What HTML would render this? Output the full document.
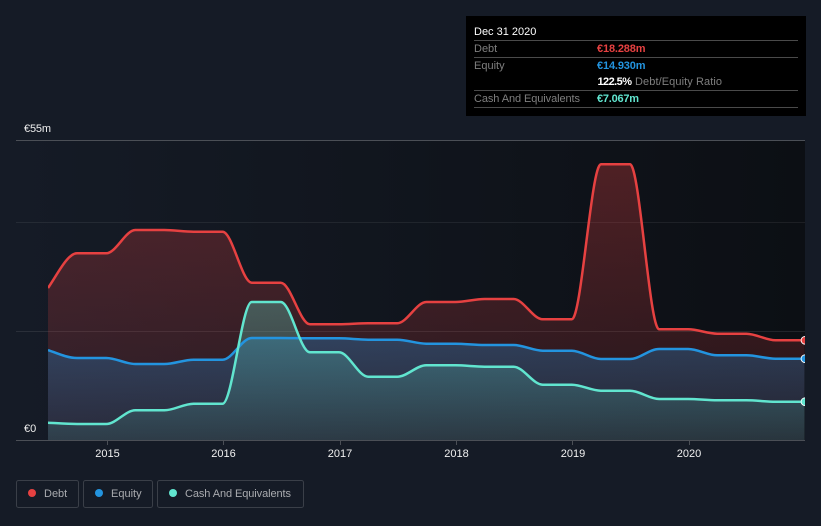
<!DOCTYPE html>
<html><head><meta charset="utf-8">
<style>
html,body{margin:0;padding:0;background:#151b26;}
body{width:821px;height:526px;overflow:hidden;position:relative;font-family:"Liberation Sans",sans-serif;}
svg{position:absolute;left:0;top:0;}
text{font-family:"Liberation Sans",sans-serif;font-size:11px;}
</style></head><body>
<svg width="821" height="526" viewBox="0 0 821 526" xmlns="http://www.w3.org/2000/svg">
<defs>
<linearGradient id="bg" x1="0" x2="1" y1="0" y2="0"><stop offset="0" stop-color="#151b26"/><stop offset="1" stop-color="#0c0f14"/></linearGradient>
<linearGradient id="fr" x1="0" x2="0" y1="0" y2="1"><stop offset="0" stop-color="#e64141" stop-opacity=".3"/><stop offset="1" stop-color="#e64141" stop-opacity=".1"/></linearGradient>
<linearGradient id="fb" x1="0" x2="0" y1="0" y2="1"><stop offset="0" stop-color="#2394df" stop-opacity=".3"/><stop offset="1" stop-color="#2394df" stop-opacity=".1"/></linearGradient>
<linearGradient id="fc" x1="0" x2="0" y1="0" y2="1"><stop offset="0" stop-color="#61e5cf" stop-opacity=".3"/><stop offset="1" stop-color="#61e5cf" stop-opacity=".1"/></linearGradient>
<clipPath id="plot"><rect x="48" y="140" width="757" height="300"/></clipPath>
</defs>
<rect width="821" height="526" fill="#151b26"/>
<rect x="16" y="140" width="789" height="300" fill="url(#bg)"/>
<rect x="16" y="222" width="789" height="1" fill="#fff" fill-opacity=".07"/>
<rect x="16" y="331" width="789" height="1" fill="#fff" fill-opacity=".09"/>
<rect x="16" y="140" width="789" height="1" fill="#4b4f56"/>
<g clip-path="url(#plot)">
<path fill="url(#fr)" d="M48 288c9.7 -14 19.4 -34.7 29.1 -34.7h29.1c9.7 0 19.4 -23.3 29.1 -23.3h29.1c9.7 0 19.4 1.7 29.1 1.7h29.1c9.7 0 19.4 51 29.1 51h29.1c9.7 0 19.4 41.6 29.1 41.6h29.1c9.7 0 19.4 -1 29.1 -1h29.1c9.7 0 19.4 -21.3 29.1 -21.3h29.1c9.7 0 19.4 -3 29.1 -3h29.1c9.7 0 19.4 20.3 29.1 20.3h29.1c9.7 0 19.4 -155 29.1 -155h29.1c9.7 0 19.4 165 29.1 165h29.1c9.7 0 19.4 4.4 29.1 4.4h29.1c9.7 0 19.4 6.6 29.1 6.6h29.1V440H48Z"/>
<path fill="url(#fb)" d="M48 350c9.7 3.5 19.4 8 29.1 8h29.1c9.7 0 19.4 6 29.1 6h29.1c9.7 0 19.4 -4.3 29.1 -4.3h29.1c9.7 0 19.4 -21.7 29.1 -21.7h29.1c9.7 0 19.4 .3 29.1 .3h29.1c9.7 0 19.4 1.4 29.1 1.4h29.1c9.7 0 19.4 4 29.1 4h29.1c9.7 0 19.4 1.3 29.1 1.3h29.1c9.7 0 19.4 5.7 29.1 5.7h29.1c9.7 0 19.4 8.3 29.1 8.3h29.1c9.7 0 19.4 -10 29.1 -10h29.1c9.7 0 19.4 6.3 29.1 6.3h29.1c9.7 0 19.4 3.4 29.1 3.4h29.1V440H48Z"/>
<path fill="url(#fc)" d="M48 422.7c9.7 .5 19.4 1.3 29.1 1.3h29.1c9.7 0 19.4 -13.7 29.1 -13.7h29.1c9.7 0 19.4 -6.6 29.1 -6.6h29.1c9.7 0 19.4 -101.7 29.1 -101.7h29.1c9.7 0 19.4 50.3 29.1 50.3h29.1c9.7 0 19.4 24.4 29.1 24.4h29.1c9.7 0 19.4 -11.4 29.1 -11.4h29.1c9.7 0 19.4 1.4 29.1 1.4h29.1c9.7 0 19.4 18 29.1 18h29.1c9.7 0 19.4 6 29.1 6h29.1c9.7 0 19.4 8.3 29.1 8.3h29.1c9.7 0 19.4 1.3 29.1 1.3h29.1c9.7 0 19.4 1.4 29.1 1.4h29.1V440H48Z"/>
<path fill="none" stroke="#e64141" stroke-width="2.5" d="M48 288c9.7 -14 19.4 -34.7 29.1 -34.7h29.1c9.7 0 19.4 -23.3 29.1 -23.3h29.1c9.7 0 19.4 1.7 29.1 1.7h29.1c9.7 0 19.4 51 29.1 51h29.1c9.7 0 19.4 41.6 29.1 41.6h29.1c9.7 0 19.4 -1 29.1 -1h29.1c9.7 0 19.4 -21.3 29.1 -21.3h29.1c9.7 0 19.4 -3 29.1 -3h29.1c9.7 0 19.4 20.3 29.1 20.3h29.1c9.7 0 19.4 -155 29.1 -155h29.1c9.7 0 19.4 165 29.1 165h29.1c9.7 0 19.4 4.4 29.1 4.4h29.1c9.7 0 19.4 6.6 29.1 6.6h29.1"/>
<path fill="none" stroke="#2394df" stroke-width="2.5" d="M48 350c9.7 3.5 19.4 8 29.1 8h29.1c9.7 0 19.4 6 29.1 6h29.1c9.7 0 19.4 -4.3 29.1 -4.3h29.1c9.7 0 19.4 -21.7 29.1 -21.7h29.1c9.7 0 19.4 .3 29.1 .3h29.1c9.7 0 19.4 1.4 29.1 1.4h29.1c9.7 0 19.4 4 29.1 4h29.1c9.7 0 19.4 1.3 29.1 1.3h29.1c9.7 0 19.4 5.7 29.1 5.7h29.1c9.7 0 19.4 8.3 29.1 8.3h29.1c9.7 0 19.4 -10 29.1 -10h29.1c9.7 0 19.4 6.3 29.1 6.3h29.1c9.7 0 19.4 3.4 29.1 3.4h29.1"/>
<path fill="none" stroke="#61e5cf" stroke-width="2.5" d="M48 422.7c9.7 .5 19.4 1.3 29.1 1.3h29.1c9.7 0 19.4 -13.7 29.1 -13.7h29.1c9.7 0 19.4 -6.6 29.1 -6.6h29.1c9.7 0 19.4 -101.7 29.1 -101.7h29.1c9.7 0 19.4 50.3 29.1 50.3h29.1c9.7 0 19.4 24.4 29.1 24.4h29.1c9.7 0 19.4 -11.4 29.1 -11.4h29.1c9.7 0 19.4 1.4 29.1 1.4h29.1c9.7 0 19.4 18 29.1 18h29.1c9.7 0 19.4 6 29.1 6h29.1c9.7 0 19.4 8.3 29.1 8.3h29.1c9.7 0 19.4 1.3 29.1 1.3h29.1c9.7 0 19.4 1.4 29.1 1.4h29.1"/>
<circle cx="805" cy="340.3" r="3.9" fill="#e64141" stroke="#fff" stroke-width=".9"/>
<circle cx="805" cy="358.7" r="3.9" fill="#2394df" stroke="#fff" stroke-width=".9"/>
<circle cx="805" cy="401.7" r="3.9" fill="#61e5cf" stroke="#fff" stroke-width=".9"/>
</g>
<rect x="16" y="440" width="789" height="1" fill="#4b4f56"/>
<g fill="#4b4f56">
<rect x="107" y="441" width="1" height="4"/><rect x="223" y="441" width="1" height="4"/><rect x="340" y="441" width="1" height="4"/><rect x="456" y="441" width="1" height="4"/><rect x="572" y="441" width="1" height="4"/><rect x="689" y="441" width="1" height="4"/>
</g>
<g fill="#f0f0f0" text-anchor="middle">
<text x="107.5" y="457">2015</text><text x="223.5" y="457">2016</text><text x="340" y="457">2017</text><text x="456.5" y="457">2018</text><text x="573" y="457">2019</text><text x="689" y="457">2020</text>
</g>
<text x="24" y="132" fill="#f0f0f0" textLength="27">€55m</text>
<text x="24" y="432" fill="#f0f0f0">€0</text>

<rect x="466" y="16" width="340" height="100" fill="#000"/>
<g fill="#4a4a4a">
<rect x="474" y="40" width="324" height="1"/><rect x="474" y="57" width="324" height="1"/><rect x="474" y="90" width="324" height="1"/><rect x="474" y="107" width="324" height="1"/>
</g>
<text x="474" y="35" fill="#fff">Dec 31 2020</text>
<text x="474" y="52" fill="#7f7f7f">Debt</text>
<text x="597" y="52" fill="#e64141" font-weight="bold" textLength="48.5">€18.288m</text>
<text x="474" y="69" fill="#7f7f7f">Equity</text>
<text x="597" y="69" fill="#2394df" font-weight="bold" textLength="48.5">€14.930m</text>
<text x="597.5" y="85" fill="#fff" font-weight="bold" textLength="34.5">122.5%</text>
<text x="635" y="85" fill="#7f7f7f" textLength="87">Debt/Equity Ratio</text>
<text x="474" y="102" fill="#7f7f7f" textLength="106">Cash And Equivalents</text>
<text x="597" y="102" fill="#61e5cf" font-weight="bold" textLength="42">€7.067m</text>

<g fill="none" stroke="#3a3f48">
<rect x="16.5" y="480.5" width="62" height="27" rx="2"/>
<rect x="83.5" y="480.5" width="69" height="27" rx="2"/>
<rect x="157.5" y="480.5" width="146" height="27" rx="2"/>
</g>
<circle cx="32" cy="493" r="4" fill="#e64141"/>
<circle cx="99" cy="493" r="4" fill="#2394df"/>
<circle cx="173" cy="493" r="4" fill="#61e5cf"/>
<text x="44" y="497" fill="#a9abaf">Debt</text>
<text x="111" y="497" fill="#a9abaf">Equity</text>
<text x="185" y="497" fill="#a9abaf" textLength="106">Cash And Equivalents</text>
</svg>
</body></html>
